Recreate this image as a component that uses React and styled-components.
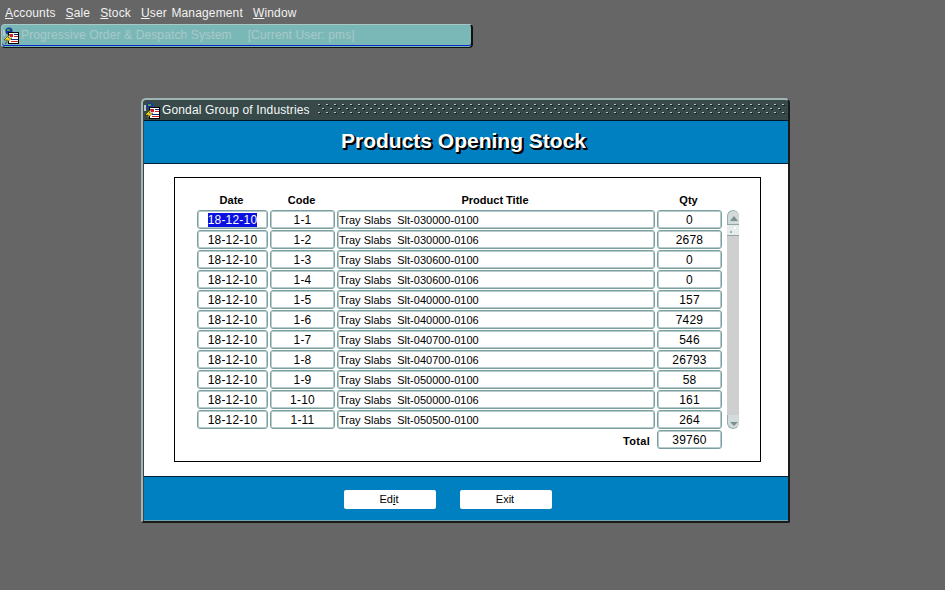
import React from 'react'
import styled, { createGlobalStyle } from 'styled-components'

const GlobalStyle = createGlobalStyle`
  html, body { margin: 0; padding: 0; background: #666666; }
  body { font-family: "Liberation Sans", Arial, sans-serif; font-size: 12px; overflow: hidden; }
`

const Desktop = styled.div`
  width: 945px;
  height: 590px;
  background: #666666;
  overflow: hidden;
`

const MenuBar = styled.div`
  display: flex;
  height: 24px;
  padding: 5px 0 0 5px;
  box-sizing: border-box;
  gap: 10px;
  color: #f2f2f2;
  font-size: 12px;
  line-height: 16px;
  letter-spacing: 0.15px;
  word-spacing: 1px;
`

const Hot = styled.span`
  text-decoration: underline;
`

const AppBar = styled.div`
  display: flex;
  align-items: center;
  gap: 2px;
  width: 472px;
  height: 24px;
  margin-left: 1px;
  padding: 0 0 2px 1px;
  box-sizing: border-box;
  background: #7ab8b8;
  border: 1px solid #a8c8c8;
  border-right: 2px solid #111;
  border-bottom: 1px solid #111;
  border-radius: 4px;
  box-shadow: inset 0 -1px 0 #7ab8b8, inset 0 -2px 0 #0a28c8;
  color: #a9c8c8;
  font-size: 12px;
  letter-spacing: 0.13px;
  white-space: pre;
`

const AppUser = styled.span`
  margin-left: 14px;
`

const Window = styled.div`
  width: 649px;
  height: 425px;
  margin: 50px 0 0 141px;
  box-sizing: border-box;
  border: 2px solid #a0b4b4;
  border-right: 2px solid #1a1a1a;
  border-bottom: 2px solid #1a1a1a;
  border-radius: 5px 5px 2px 2px;
  background: #38494a;
  display: flex;
  flex-direction: column;
  overflow: hidden;
`

const TitleBar = styled.div`
  display: flex;
  align-items: center;
  gap: 2px;
  height: 20px;
  flex: none;
  padding-left: 1px;
  color: #f4f8f8;
  font-size: 12px;
  letter-spacing: 0.14px;
  white-space: nowrap;
`

const DotsSvg = styled.svg`
  flex: 1;
  min-width: 0;
  height: 12px;
  margin: 0 2px 0 6px;
`

const BlueHeader = styled.div`
  height: 44px;
  flex: none;
  margin-left: 1px;
  padding: 0 5px 2px 0;
  background: #0080c0;
  border-bottom: 1px solid #002030;
  box-sizing: border-box;
  border-top: 1px solid #001828;
  display: flex;
  align-items: center;
  justify-content: center;
  color: #fff;
  font-size: 21px;
  font-weight: bold;
  text-shadow: 1px 1px 0 #000, 2px 1px 0 #000, 1px 2px 0 #000, 2px 2px 0 #000;
`

const Body = styled.div`
  flex: 1;
  margin-left: 1px;
  background: #fff;
  padding: 13px 0 14px 30px;
  display: flex;
  box-sizing: border-box;
`

const Panel = styled.div`
  width: 587px;
  box-sizing: border-box;
  border: 1px solid #000;
  padding: 12px 0 0 22px;
  display: flex;
  gap: 5px;
  align-items: flex-start;
`

const Table = styled.div`
  display: grid;
  grid-template-columns: 71px 65px 318px 65px;
  column-gap: 2px;
  grid-auto-rows: 20px;
`

const HeadCell = styled.div`
  font-weight: bold;
  font-size: 11px;
  line-height: 20px;
  text-align: center;
  padding-right: 2px;
  color: #000;
`

const Field = styled.div`
  box-sizing: border-box;
  height: 19px;
  border: 1px solid #7d9fa0;
  box-shadow: inset 0 0 0 1px #b6cccc;
  border-radius: 3px;
  background: #fff;
  display: flex;
  align-items: center;
  justify-content: ${p => (p.$left ? 'flex-start' : 'center')};
  padding-left: ${p => (p.$left ? '1px' : '0')};
  font-size: ${p => (p.$left ? '11px' : '12px')};
  letter-spacing: ${p => (p.$left ? '0' : '0.2px')};
  color: #000;
  white-space: pre;
  overflow: hidden;
`

const Selected = styled.span`
  background: #0a10e0;
  color: #fff;
`

const Scroll = styled.div`
  margin-top: 20px;
  width: 12px;
  height: 219px;
  background: #cfcfcf;
  border-radius: 6px;
  display: flex;
  flex-direction: column;
  justify-content: space-between;
  overflow: hidden;
`

const ScrollTop = styled.div`
  display: flex;
  flex-direction: column;
`

const ArrowBtn = styled.div`
  height: 14px;
  flex: none;
  background: #d2dada;
  box-sizing: border-box;
  border-left: 1px solid #8fb0b0;
  ${p => (p.$down ? 'border-bottom: 1px solid #8fb0b0;' : 'border-top: 1px solid #8fb0b0;')}
  border-radius: ${p => (p.$down ? '0 0 6px 6px' : '6px 6px 0 0')};
  display: flex;
  align-items: ${p => (p.$down ? 'flex-start' : 'flex-end')};
  justify-content: center;
  padding: ${p => (p.$down ? '7px 0 0' : '0 0 3px')};
  &::after {
    content: '';
    border-left: 4px solid transparent;
    border-right: 4px solid transparent;
    ${p => (p.$down ? 'border-top: 4px solid #7a9090;' : 'border-bottom: 5px solid #7a9090;')}
  }
`

const Thumb = styled.div`
  height: 12px;
  background:
    linear-gradient(#fff, #fff) 7px 2px / 2px 2px no-repeat,
    linear-gradient(#a0b0b0, #a0b0b0) 3px 6px / 2px 2px no-repeat,
    #e6ecec;
  border-top: 1px solid #8fa5a5;
  border-bottom: 1px solid #8fa5a5;
  box-sizing: border-box;
`

const TotalLabel = styled.div`
  grid-column: 1 / span 3;
  font-weight: bold;
  font-size: 11px;
  line-height: 22px;
  text-align: right;
  padding-right: 5px;
  letter-spacing: 0.3px;
`

const Footer = styled.div`
  height: 45px;
  flex: none;
  margin-left: 1px;
  background: #0080c0;
  border-top: 1px solid #002030;
  border-bottom: 1px solid #6fa6b4;
  box-sizing: border-box;
  display: flex;
  padding: 13px 0 0 200px;
  gap: 24px;
`

const Button = styled.div`
  width: 92px;
  height: 19px;
  padding-right: 2px;
  box-sizing: border-box;
  background: #fff;
  border-radius: 2px;
  font-size: 11px;
  line-height: 19px;
  text-align: center;
  color: #000;
`

const OracleIcon = () => (
  <svg width="16" height="17" viewBox="0 0 16 17" style={{ flex: 'none' }}>
    <circle cx="6" cy="4" r="3.6" fill="#1a3a9a" />
    <rect x="4" y="2" width="3" height="2" fill="#3fa04a" />
    <rect x="0" y="3" width="2" height="6" fill="#b8c8c8" />
    <rect x="5.5" y="5.5" width="10" height="11" fill="#fff" stroke="#000" />
    <rect x="7" y="7" width="3" height="3" fill="#d02020" />
    <rect x="11" y="7" width="4" height="1" fill="#102a80" />
    <rect x="11" y="9" width="4" height="1" fill="#d02020" />
    <rect x="8" y="12" width="7" height="1" fill="#102a80" />
    <rect x="8" y="14" width="7" height="1" fill="#d02020" />
    <path d="M7 7 L1 13 L4.500 13 L2 17 L9 11 L5.500 11 Z" fill="#f4d820" stroke="#000" strokeWidth="0.4" />
  </svg>
)

const Dots = () => (
  <DotsSvg>
    <defs>
      <pattern id="titleDots" width="8" height="8" patternUnits="userSpaceOnUse">
        <rect x="0" y="0" width="2" height="1" fill="#b4c2c2" />
        <rect x="1" y="1" width="2" height="1" fill="#10191a" />
        <rect x="4" y="4" width="2" height="1" fill="#b4c2c2" />
        <rect x="5" y="5" width="2" height="1" fill="#10191a" />
      </pattern>
    </defs>
    <rect width="100%" height="100%" fill="url(#titleDots)" />
  </DotsSvg>
)

const rows = [
  ['1-1', 'Slt-030000-0100', '0'],
  ['1-2', 'Slt-030000-0106', '2678'],
  ['1-3', 'Slt-030600-0100', '0'],
  ['1-4', 'Slt-030600-0106', '0'],
  ['1-5', 'Slt-040000-0100', '157'],
  ['1-6', 'Slt-040000-0106', '7429'],
  ['1-7', 'Slt-040700-0100', '546'],
  ['1-8', 'Slt-040700-0106', '26793'],
  ['1-9', 'Slt-050000-0100', '58'],
  ['1-10', 'Slt-050000-0106', '161'],
  ['1-11', 'Slt-050500-0100', '264']
]

const App = () => (
  <Desktop>
    <GlobalStyle />
    <MenuBar>
      <span><Hot>A</Hot>ccounts</span>
      <span><Hot>S</Hot>ale</span>
      <span><Hot>S</Hot>tock</span>
      <span><Hot>U</Hot>ser Management</span>
      <span><Hot>W</Hot>indow</span>
    </MenuBar>
    <AppBar>
      <OracleIcon />
      <span>Progressive Order &amp; Despatch System</span>
      <AppUser>[Current User: pms]</AppUser>
    </AppBar>
    <Window>
      <TitleBar>
        <OracleIcon />
        Gondal Group of Industries
        <Dots />
      </TitleBar>
      <BlueHeader>Products Opening Stock</BlueHeader>
      <Body>
        <Panel>
          <Table>
            <HeadCell>Date</HeadCell>
            <HeadCell>Code</HeadCell>
            <HeadCell>Product Title</HeadCell>
            <HeadCell>Qty</HeadCell>
            {rows.map(([code, title, qty], i) => (
              <React.Fragment key={code}>
                <Field>{i === 0 ? <Selected>18-12-10</Selected> : '18-12-10'}</Field>
                <Field>{code}</Field>
                <Field $left>{`Tray Slabs  ${title}`}</Field>
                <Field>{qty}</Field>
              </React.Fragment>
            ))}
            <TotalLabel>Total</TotalLabel>
            <Field>39760</Field>
          </Table>
          <Scroll>
            <ScrollTop>
              <ArrowBtn />
              <Thumb />
            </ScrollTop>
            <ArrowBtn $down />
          </Scroll>
        </Panel>
      </Body>
      <Footer>
        <Button>Ed<Hot>i</Hot>t</Button>
        <Button>Exit</Button>
      </Footer>
    </Window>
  </Desktop>
)

export default App
